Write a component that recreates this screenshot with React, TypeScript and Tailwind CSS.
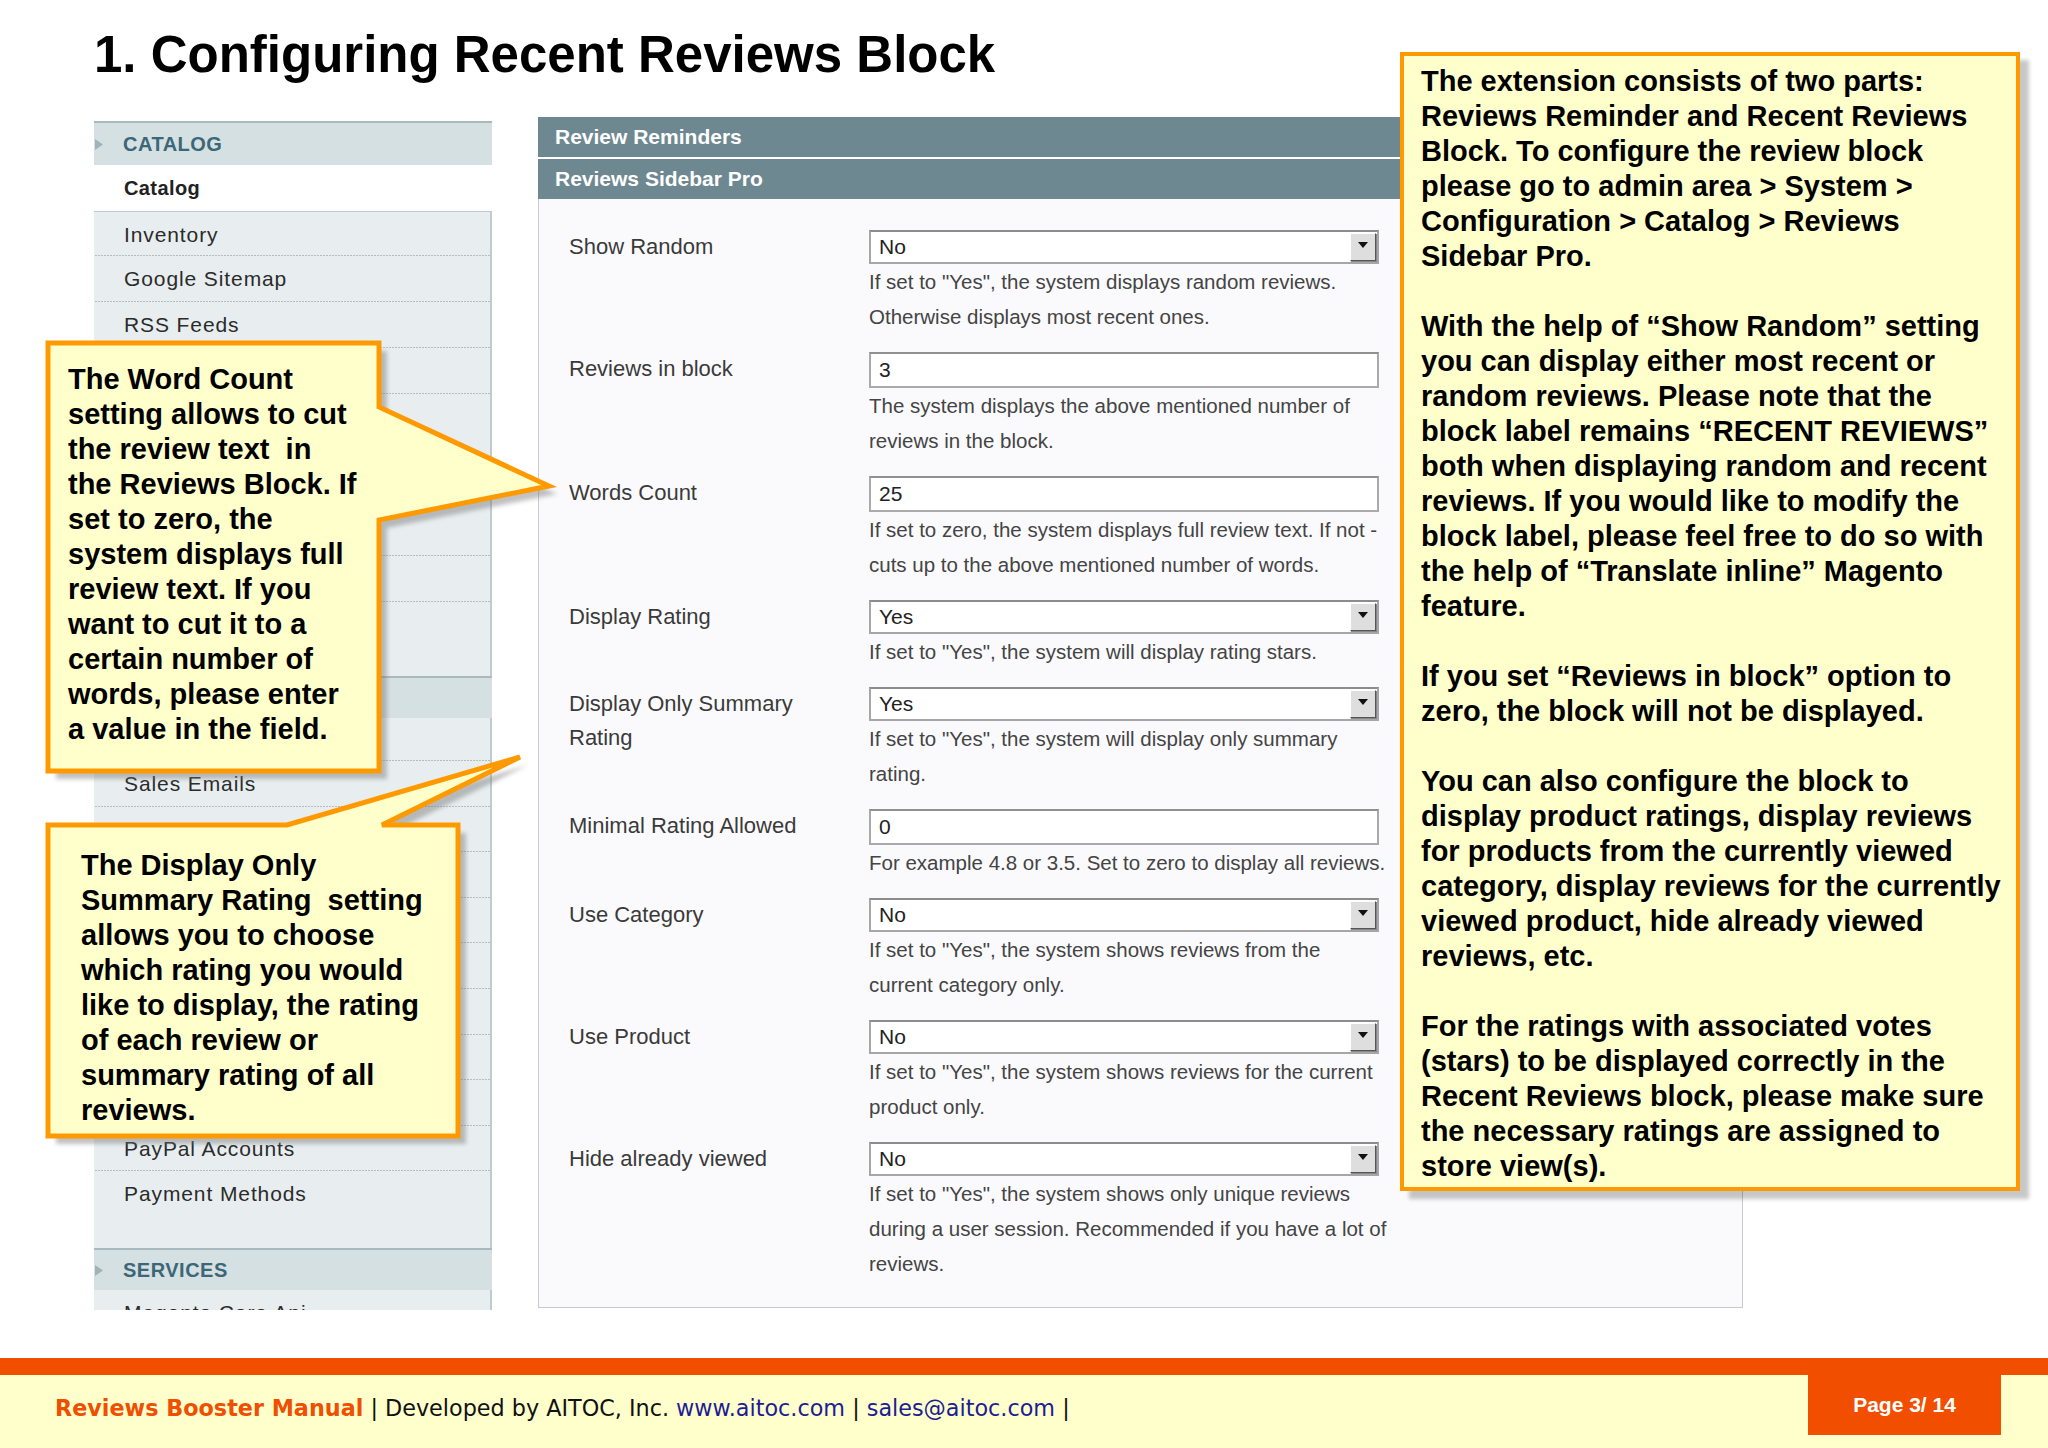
const dots =
  "bg-[linear-gradient(to_right,#7f8b8f_1px,transparent_1px)] bg-[length:3px_1px] bg-bottom bg-repeat-x";

function NavItem({ label, className }: { label?: string; className: string }) {
  return (
    <div className={`flex items-start pl-[30px] pt-[11px] text-[21px] leading-[24px] tracking-[0.9px] text-[#2b2b2b] ${className}`}>
      {label}
    </div>
  );
}

function NavHeader({ label }: { label?: string }) {
  return (
    <div className="flex h-[42px] items-center border-t-2 border-[#aab9bd] bg-[#d5e0e3]">
      <svg width="8" height="11" viewBox="0 0 8 11" className="ml-[1px]" aria-hidden="true">
        <path d="M0 0L8 5.5L0 11Z" fill="#9fb3b9" />
      </svg>
      <span className="ml-[20px] text-[20px] font-bold tracking-[0.5px] text-[#3b6777]">{label}</span>
    </div>
  );
}

function Sidebar() {
  return (
    <div className="ml-[94px] mt-[4px] h-[1189px] w-[398px] overflow-hidden">
      <div className="flex h-[44px] items-center border-t-2 border-[#aab9bd] bg-[#d5e0e3]">
        <svg width="8" height="11" viewBox="0 0 8 11" className="ml-[1px]" aria-hidden="true">
          <path d="M0 0L8 5.5L0 11Z" fill="#9fb3b9" />
        </svg>
        <span className="ml-[20px] text-[20px] font-bold tracking-[0.5px] text-[#3b6777]">CATALOG</span>
      </div>
      <div className="flex h-[46px] items-center bg-white pl-[30px] text-[20px] font-bold tracking-[0.4px] text-[#222]">Catalog</div>
      <div className="border-t border-r-2 border-[#bfcbce] bg-[#e8eef0]">
        <NavItem label="Inventory" className={`h-[44px] ${dots}`} />
        <NavItem label="Google Sitemap" className={`h-[46px] ${dots}`} />
        <NavItem label="RSS Feeds" className={`h-[46px] ${dots}`} />
        <NavItem className={`h-[46px] ${dots}`} />
        <NavItem className={`h-[81px] ${dots}`} />
        <NavItem className={`h-[81px] ${dots}`} />
        <NavItem className={`h-[46px] ${dots}`} />
        <NavItem className="h-[74px]" />
      </div>
      <NavHeader />
      <div className="border-r-2 border-[#bfcbce] bg-[#e8eef0]">
        <NavItem className={`h-[43px] ${dots}`} />
        <NavItem label="Sales Emails" className={`h-[46px] ${dots}`} />
        <NavItem className={`h-[45px] ${dots}`} />
        <NavItem className={`h-[46px] ${dots}`} />
        <NavItem className={`h-[45px] ${dots}`} />
        <NavItem className={`h-[46px] ${dots}`} />
        <NavItem className={`h-[46px] ${dots}`} />
        <NavItem className={`h-[45px] ${dots}`} />
        <NavItem className={`h-[46px] ${dots}`} />
        <NavItem label="PayPal Accounts" className={`h-[45px] ${dots}`} />
        <NavItem label="Payment Methods" className="h-[77px]" />
      </div>
      <NavHeader label="SERVICES" />
      <div className="border-r-2 border-[#bfcbce] bg-[#e8eef0]">
        <NavItem label="Magento Core Api" className="h-[46px]" />
      </div>
    </div>
  );
}

function Select({ value }: { value: string }) {
  return (
    <div className="flex h-[34px] items-center border-2 border-[#a6a6a6] border-t-[#8c8c8c] bg-white pl-[8px] text-[21px] text-[#222]">
      <span>{value}</span>
      <div className="ml-auto mr-[1px] flex h-[28px] w-[26px] items-start justify-center border border-t-white border-l-white border-r-[#555] border-b-[#555] bg-[#dedede] pt-[8px] shadow-[1px_1px_0_#888]">
        <svg width="10" height="6" viewBox="0 0 10 6" aria-hidden="true">
          <path d="M0 0H10L5 6Z" fill="#111" />
        </svg>
      </div>
    </div>
  );
}

function Input({ value }: { value: string }) {
  return (
    <div className="flex h-[36px] items-center border-2 border-[#aaaaaa] border-t-[#909090] bg-white pl-[8px] text-[21px] text-[#222]">
      {value}
    </div>
  );
}

function Row({ label, control, help }: { label: string[]; control: React.ReactNode; help: string[] }) {
  return (
    <div className="mb-[18px] flex">
      <div className="w-[330px] pl-[30px] text-[22px] leading-[34px] text-[#3a3a3a]">
        {label.map((l) => (
          <div key={l}>{l}</div>
        ))}
      </div>
      <div className="w-[510px]">
        {control}
        <div className="whitespace-nowrap text-[20.5px] leading-[35px] text-[#444]">
          {help.map((h) => (
            <div key={h}>{h}</div>
          ))}
        </div>
      </div>
    </div>
  );
}

function Panel() {
  return (
    <div className="ml-[46px] w-[1205px]">
      <div className="flex h-[40px] items-center bg-[#6e8892] pl-[17px] text-[21px] font-bold text-white">Review Reminders</div>
      <div className="h-[2px] bg-white" />
      <div className="flex h-[40px] items-center bg-[#6e8892] pl-[17px] text-[21px] font-bold text-white">Reviews Sidebar Pro</div>
      <div className="border border-t-0 border-[#cacaca] bg-[#fafafc] pb-[8px] pt-[31px]">
        <Row
          label={["Show Random"]}
          control={<Select value="No" />}
          help={['If set to "Yes", the system displays random reviews.', "Otherwise displays most recent ones."]}
        />
        <Row
          label={["Reviews in block"]}
          control={<Input value="3" />}
          help={["The system displays the above mentioned number of", "reviews in the block."]}
        />
        <Row
          label={["Words Count"]}
          control={<Input value="25" />}
          help={["If set to zero, the system displays full review text. If not -", "cuts up to the above mentioned number of words."]}
        />
        <Row
          label={["Display Rating"]}
          control={<Select value="Yes" />}
          help={['If set to "Yes", the system will display rating stars.']}
        />
        <Row
          label={["Display Only Summary", "Rating"]}
          control={<Select value="Yes" />}
          help={['If set to "Yes", the system will display only summary', "rating."]}
        />
        <Row
          label={["Minimal Rating Allowed"]}
          control={<Input value="0" />}
          help={["For example 4.8 or 3.5. Set to zero to display all reviews."]}
        />
        <Row
          label={["Use Category"]}
          control={<Select value="No" />}
          help={['If set to "Yes", the system shows reviews from the', "current category only."]}
        />
        <Row
          label={["Use Product"]}
          control={<Select value="No" />}
          help={['If set to "Yes", the system shows reviews for the current', "product only."]}
        />
        <Row
          label={["Hide already viewed"]}
          control={<Select value="No" />}
          help={[
            'If set to "Yes", the system shows only unique reviews',
            "during a user session. Recommended if you have a lot of",
            "reviews.",
          ]}
        />
      </div>
    </div>
  );
}

function CalloutShape({ id, d, w, h }: { id: string; d: string; w: number; h: number }) {
  return (
    <svg width={w} height={h} className="absolute left-0 top-0" aria-hidden="true">
      <defs>
        <filter id={id} x="-10%" y="-10%" width="120%" height="120%">
          <feGaussianBlur stdDeviation="2" />
        </filter>
      </defs>
      <path d={d} transform="translate(8 8)" fill="#777" opacity="0.45" filter={`url(#${id})`} />
      <path d={d} fill="#ffffcc" stroke="#ff9900" strokeWidth="5" />
    </svg>
  );
}

const calloutText = "absolute whitespace-pre text-[29px] font-bold leading-[35px] text-black";

function Footer() {
  return (
    <div className="h-[90px]">
      <div className="h-[17px] bg-[#f24e00]" />
      <div className="flex h-[73px] justify-between bg-[#ffffcc]">
        <div className="pl-[55px] pt-[19px] font-['DejaVu_Sans',Verdana,sans-serif] text-[22.3px] leading-[28px] text-[#111]">
          <span className="font-bold text-[#f04e00]">Reviews Booster Manual</span> | Developed by AITOC, Inc.{" "}
          <span className="text-[#1c1c96]">www.aitoc.com</span> | <span className="text-[#1c1c96]">sales@aitoc.com</span> |
        </div>
        <div className="mr-[47px] -mt-[17px] flex h-[77px] w-[193px] justify-center bg-[#f24e00] pt-[33px] text-[21px] font-bold leading-[28px] text-white">
          Page 3/ 14
        </div>
      </div>
    </div>
  );
}

export default function App() {
  return (
    <div className="relative h-[1448px] w-[2048px] overflow-hidden bg-white font-['Liberation_Sans',Arial,sans-serif]">
      <h1 className="h-[117px] pl-[94px] pt-[25px] text-[51px] font-bold leading-[60px] text-black">
        1. Configuring Recent Reviews Block
      </h1>
      <div className="flex h-[1241px] items-start">
        <Sidebar />
        <Panel />
      </div>
      <Footer />

      {/* word count callout */}
      <div className="absolute left-[40px] top-[335px] h-[460px] w-[530px]">
        <CalloutShape id="sh1" w={530} h={460} d="M8,8 H339 V72 L509,151 L339,185 V436 H8 Z" />
        <div className={`${calloutText} left-[28px] top-[27px]`}>
          {"The Word Count\nsetting allows to cut\nthe review text  in\nthe Reviews Block. If\nset to zero, the\nsystem displays full\nreview text. If you\nwant to cut it to a\ncertain number of\nwords, please enter\na value in the field."}
        </div>
      </div>

      {/* summary rating callout */}
      <div className="absolute left-[40px] top-[745px] h-[410px] w-[530px]">
        <CalloutShape id="sh2" w={530} h={410} d="M8,80 H247 L480,12 L342,80 H418 V391 H8 Z" />
        <div className={`${calloutText} left-[41px] top-[103px]`}>
          {"The Display Only\nSummary Rating  setting\nallows you to choose\nwhich rating you would\nlike to display, the rating\nof each review or\nsummary rating of all\nreviews."}
        </div>
      </div>

      {/* right info box */}
      <div className="absolute left-[1400px] top-[52px] h-[1139px] w-[620px] whitespace-pre border-4 border-[#ff9900] bg-[#ffffcc] pl-[17px] pt-[8px] text-[29px] font-bold leading-[35px] text-black shadow-[9px_8px_4px_rgba(0,0,0,0.22)]">
        {"The extension consists of two parts:\nReviews Reminder and Recent Reviews\nBlock. To configure the review block\nplease go to admin area > System >\nConfiguration > Catalog > Reviews\nSidebar Pro.\n\nWith the help of \u201cShow Random\u201d setting\nyou can display either most recent or\nrandom reviews. Please note that the\nblock label remains \u201cRECENT REVIEWS\u201d\nboth when displaying random and recent\nreviews. If you would like to modify the\nblock label, please feel free to do so with\nthe help of \u201cTranslate inline\u201d Magento\nfeature.\n\nIf you set \u201cReviews in block\u201d option to\nzero, the block will not be displayed.\n\nYou can also configure the block to\ndisplay product ratings, display reviews\nfor products from the currently viewed\ncategory, display reviews for the currently\nviewed product, hide already viewed\nreviews, etc.\n\nFor the ratings with associated votes\n(stars) to be displayed correctly in the\nRecent Reviews block, please make sure\nthe necessary ratings are assigned to\nstore view(s)."}
      </div>
    </div>
  );
}
